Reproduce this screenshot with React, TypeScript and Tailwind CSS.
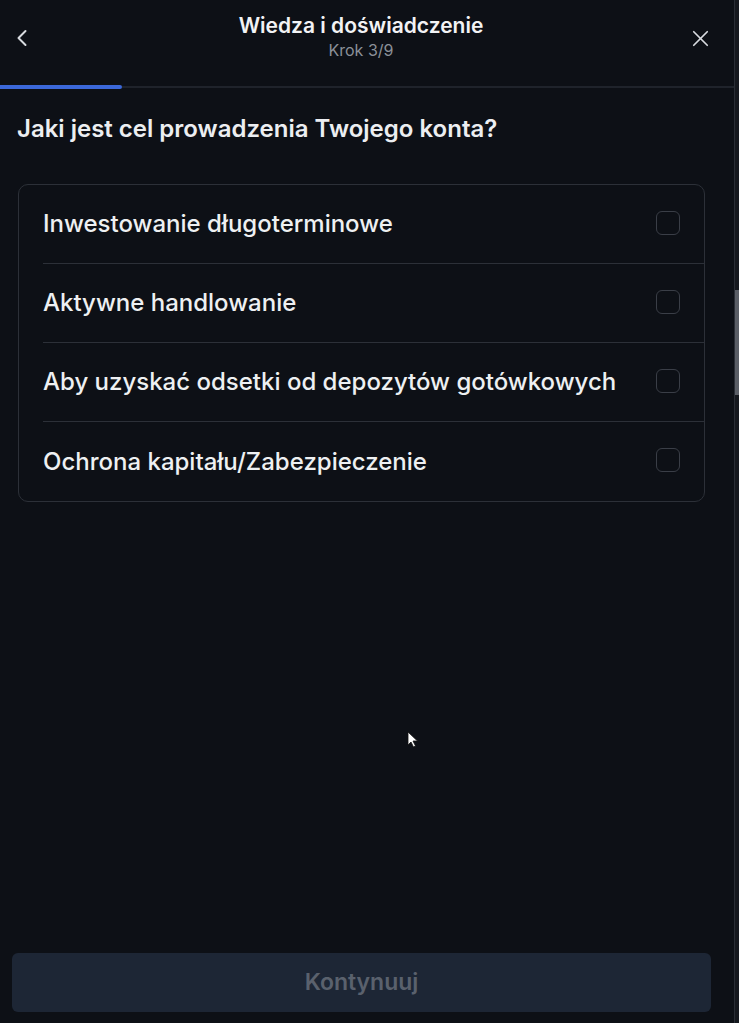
import { ChevronLeft, X } from 'lucide-react';

const options = [
  'Inwestowanie długoterminowe',
  'Aktywne handlowanie',
  'Aby uzyskać odsetki od depozytów gotówkowych',
  'Ochrona kapitału/Zabezpieczenie',
];

export default function App() {
  return (
    <div className="flex h-[1023px] w-[739px] overflow-hidden bg-[#0d1016] font-['Inter',sans-serif] text-white">
      <div className="relative flex w-[734px] flex-col">
        {/* header */}
        <div className="flex h-[84px] items-start justify-between pl-[8px] pr-[20px] pt-[13px]">
          <button className="mt-[11px] flex h-7 w-7 items-center justify-center text-[#d8dbe0]">
            <ChevronLeft size={28} strokeWidth={1.7} />
          </button>
          <div className="flex flex-col items-center">
            <div className="text-[21px] font-semibold leading-[26px] text-[#f2f3f5]">Wiedza i doświadczenie</div>
            <div className="text-[16px] leading-[22px] text-[#8b9099]">Krok 3/9</div>
          </div>
          <button className="mt-[11px] flex h-7 w-7 items-center justify-center text-[#d8dbe0]">
            <X size={27} strokeWidth={1.5} />
          </button>
        </div>

        {/* progress */}
        <div className="flex h-[5px] items-center">
          <div className="h-[4px] w-[122px] rounded-r-full bg-[#3b68d9]" />
          <div className="h-[2px] flex-1 bg-[#1f232b]" />
        </div>

        <h1 className="mt-[25px] px-[17px] text-[24px] font-semibold leading-[30px] text-[#eceef1]">
          Jaki jest cel prowadzenia Twojego konta?
        </h1>

        {/* options card */}
        <div className="mt-[40px] ml-[18px] w-[687px] rounded-[10px] border border-[#2c3038]">
          {options.map((o, i) => (
            <div key={o} className="pl-[24px]">
              <div
                className={`flex h-[79px] items-center justify-between pr-[24px] ${i < options.length - 1 ? 'border-b border-[#2c3038]' : ''}`}
              >
                <span className="text-[24px] font-medium text-[#eef0f2]">{o}</span>
                <span className="-mt-[3px] h-6 w-6 rounded-[6px] border-[1.5px] border-[#3a3e47]" />
              </div>
            </div>
          ))}
        </div>

        <div className="flex-1" />

        <div className="mb-[11px] ml-[12px] w-[699px]">
          <button className="flex h-[59px] w-full items-center justify-center rounded-[6px] bg-[#1d2635] text-[23px] font-semibold text-[#5a616d]">
            Kontynuuj
          </button>
        </div>

        {/* mouse cursor */}
        <svg className="absolute left-[407px] top-[731px]" width="12" height="17" viewBox="0 0 12 17">
          <path d="M1 1 L1 14 L4 11 L6.5 16 L8.5 15 L6 10 L10.5 10 Z" fill="#ffffff" stroke="#111" strokeWidth="0.8" />
        </svg>
      </div>

      {/* scrollbar strip */}
      <div className="relative w-[5px] border-l border-[#2a2e36] bg-[#15181e]">
        <div className="absolute left-0 top-[290px] h-[105px] w-full bg-[#5a5e66]" />
      </div>
    </div>
  );
}
